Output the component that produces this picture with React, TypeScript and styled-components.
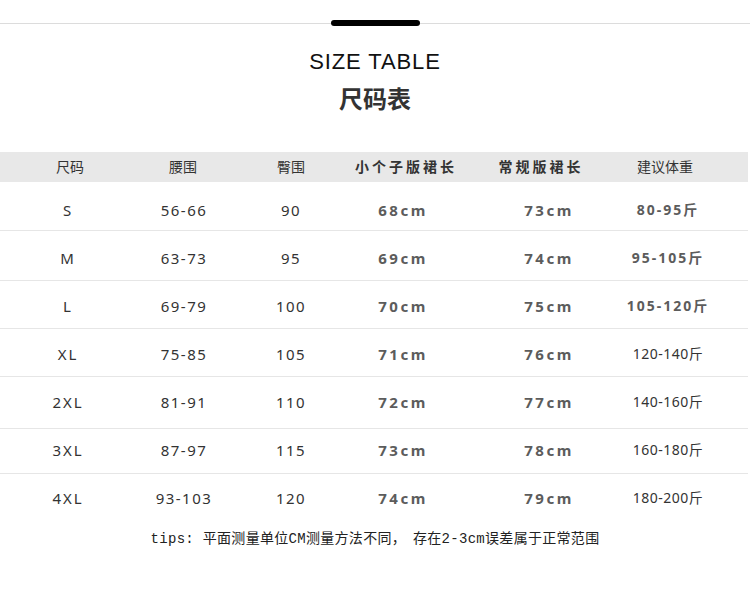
import React from "react";
import styled, { createGlobalStyle } from "styled-components";

const Global = createGlobalStyle`
  html, body { margin: 0; padding: 0; background: #ffffff; }
  body { width: 750px; height: 601px; overflow: hidden; }
  * { box-sizing: border-box; }
`;

const Page = styled.div`
  width: 750px;
  height: 601px;
  padding-top: 20px;
  display: flex;
  flex-direction: column;
  align-items: stretch;
  font-family: "Noto Sans", "Noto Sans CJK SC", sans-serif;
  color: #333;
`;

const Rule = styled.div`
  display: flex;
  align-items: center;
  height: 6px;
`;

const RuleLine = styled.div`
  flex: 1;
  height: 1px;
  background: #dcdcdc;
`;

const RuleBar = styled.div`
  width: 89px;
  height: 6px;
  border-radius: 3px;
  background: #000;
`;

const Title = styled.h1`
  margin: 23px 0 0;
  text-align: center;
  font-family: "Liberation Sans", Arial, sans-serif;
  font-weight: 400;
  font-size: 22px;
  line-height: 26px;
  letter-spacing: 0.9px;
  color: #111;
`;

const SubTitle = styled.h2`
  margin: 8px 0 0;
  text-align: center;
  font-family: "Noto Sans CJK SC", sans-serif;
  font-weight: 700;
  font-size: 24px;
  line-height: 30px;
  color: #333;
`;

const Table = styled.div`
  margin-top: 39px;
  margin-right: 2px;
  display: flex;
  flex-direction: column;
`;

const COLS = "136px 94px 122px 102px 178px 70px";

const HeadRow = styled.div`
  display: grid;
  grid-template-columns: ${COLS};
  height: 30px;
  align-items: center;
  background: #e8e8e8;
`;

const Row = styled.div<{ $h: number; $top: number; $last?: boolean }>`
  display: grid;
  grid-template-columns: ${COLS};
  height: ${(p) => p.$h}px;
  align-items: start;
  padding-top: ${(p) => p.$top}px;
  border-bottom: ${(p) => (p.$last ? "none" : "1px solid #e6e6e6")};
`;

const Cell = styled.div<{ $dx?: number; $bold?: boolean; $spacing?: number; $size?: number; $color?: string }>`
  display: flex;
  justify-content: center;
  white-space: nowrap;
  line-height: 20px;
  font-size: ${(p) => p.$size ?? 15}px;
  font-weight: ${(p) => (p.$bold ? 700 : 400)};
  letter-spacing: ${(p) => p.$spacing ?? 0}px;
  color: ${(p) => p.$color ?? "#333"};
  padding-left: ${(p) => ((p.$dx ?? 0) > 0 ? 2 * (p.$dx ?? 0) : 0)}px;
  padding-right: ${(p) => ((p.$dx ?? 0) < 0 ? -2 * (p.$dx ?? 0) : 0)}px;
`;

const Tips = styled.p`
  margin: 5px 0 0;
  text-align: center;
  font-family: "Noto Sans CJK SC", sans-serif;
  font-size: 14px;
  line-height: 20px;
  letter-spacing: 0.3px;
  color: #222;
  white-space: pre;
`;

const Mono = styled.span`
  font-family: "Liberation Mono", monospace;
  font-size: 14px;
  color: #222;
`;

type Item = {
  size: string;
  waist: string;
  hip: string;
  shortLen: string;
  regLen: string;
  weight: string;
  weightBold: boolean;
  h: number;
  top: number;
};

const rows: Item[] = [
  { size: "S", waist: "56-66", hip: "90", shortLen: "68cm", regLen: "73cm", weight: "80-95斤", weightBold: true, h: 49, top: 18 },
  { size: "M", waist: "63-73", hip: "95", shortLen: "69cm", regLen: "74cm", weight: "95-105斤", weightBold: true, h: 50, top: 17 },
  { size: "L", waist: "69-79", hip: "100", shortLen: "70cm", regLen: "75cm", weight: "105-120斤", weightBold: true, h: 48, top: 15 },
  { size: "XL", waist: "75-85", hip: "105", shortLen: "71cm", regLen: "76cm", weight: "120-140斤", weightBold: false, h: 48, top: 15 },
  { size: "2XL", waist: "81-91", hip: "110", shortLen: "72cm", regLen: "77cm", weight: "140-160斤", weightBold: false, h: 52, top: 15 },
  { size: "3XL", waist: "87-97", hip: "115", shortLen: "73cm", regLen: "78cm", weight: "160-180斤", weightBold: false, h: 45, top: 11 },
  { size: "4XL", waist: "93-103", hip: "120", shortLen: "74cm", regLen: "79cm", weight: "180-200斤", weightBold: false, h: 48, top: 14 },
];

export default function App() {
  return (
    <>
      <Global />
      <Page>
        <Rule>
          <RuleLine />
          <RuleBar />
          <RuleLine />
        </Rule>
        <Title>SIZE TABLE</Title>
        <SubTitle>尺码表</SubTitle>
        <Table>
          <HeadRow>
            <Cell $size={14} $dx={2}>尺码</Cell>
            <Cell $size={14}>腰围</Cell>
            <Cell $size={14}>臀围</Cell>
            <Cell $size={14} $bold $spacing={3} $dx={3}>小个子版裙长</Cell>
            <Cell $size={14} $bold $spacing={3} $dx={-2}>常规版裙长</Cell>
            <Cell $size={14} $dx={-2}>建议体重</Cell>
          </HeadRow>
          {rows.map((r, i) => (
            <Row key={r.size} $h={r.h} $top={r.top} $last={i === rows.length - 1}>
              <Cell $spacing={2} $dx={0}>{r.size}</Cell>
              <Cell $spacing={1.5} $dx={1}>{r.waist}</Cell>
              <Cell $spacing={1.5} $dx={0}>{r.hip}</Cell>
              <Cell $bold $spacing={2.5} $color="#5c5c5c" $dx={0}>{r.shortLen}</Cell>
              <Cell $bold $spacing={2.5} $color="#5c5c5c" $dx={6}>{r.regLen}</Cell>
              <Cell $size={14} $bold={r.weightBold} $spacing={r.weightBold ? 2 : 0.5} $color={r.weightBold ? "#5c5c5c" : "#333"} $dx={1}>
                {r.weight}
              </Cell>
            </Row>
          ))}
        </Table>
        <Tips>
          <Mono>tips: </Mono>平面测量单位<Mono>CM</Mono>测量方法不同，  存在<Mono>2-3cm</Mono>误差属于正常范围
        </Tips>
      </Page>
    </>
  );
}
